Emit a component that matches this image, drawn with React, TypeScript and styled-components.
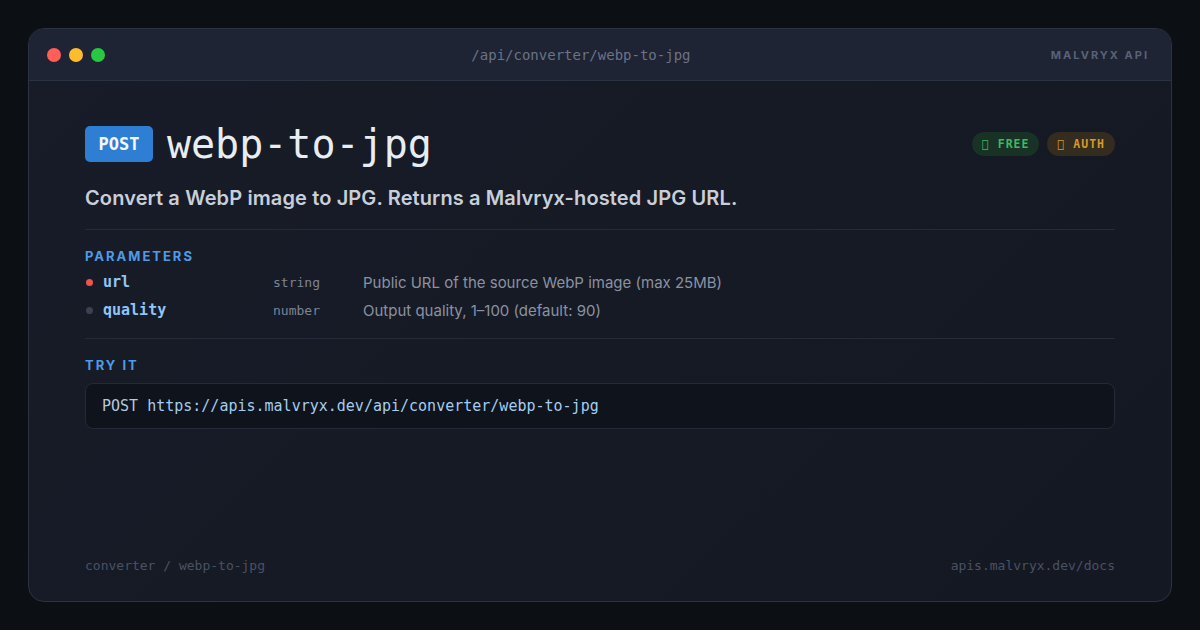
import styled, { createGlobalStyle } from "styled-components"

const mono = `"DejaVu Sans Mono", "Liberation Mono", monospace`
const sans = `Inter, "Noto Sans", sans-serif`

const GlobalStyle = createGlobalStyle`
    html, body {
        margin: 0;
        padding: 0;
        background: #0c0f14;
    }
    #root {
        width: 1200px;
        height: 630px;
    }
`

type Param = {
    name: string
    type: string
    desc: string
    required: boolean
}

const params: Param[] = [
    { name: "url", type: "string", desc: "Public URL of the source WebP image (max 25MB)", required: true },
    { name: "quality", type: "number", desc: "Output quality, 1\u2013100 (default: 90)", required: false },
]

export default function App() {
    return (
        <Page>
            <GlobalStyle />
            <Window>
                <TitleBar>
                    <Dots>
                        <Dot color="#ff5f57" />
                        <Dot color="#febc2e" />
                        <Dot color="#28c840" />
                    </Dots>
                    <TitlePath>/api/converter/webp-to-jpg</TitlePath>
                    <Brand>MALVRYX API</Brand>
                </TitleBar>
                <Body>
                    <Header>
                        <Method>POST</Method>
                        <EndpointName>webp-to-jpg</EndpointName>
                        <Badges>
                            <Badge variant="free">{"\uE000"} FREE</Badge>
                            <Badge variant="auth">{"\uE000"} AUTH</Badge>
                        </Badges>
                    </Header>
                    <Description>
                        Convert a WebP image to JPG. Returns a Malvryx-hosted JPG URL.
                    </Description>
                    <Divider top={19} bottom={18} />
                    <SectionLabel>PARAMETERS</SectionLabel>
                    <ParamList>
                        {params.map((p) => (
                            <ParamRow key={p.name}>
                                <ReqDot required={p.required} />
                                <ParamName>{p.name}</ParamName>
                                <ParamType>{p.type}</ParamType>
                                <ParamDesc>{p.desc}</ParamDesc>
                            </ParamRow>
                        ))}
                    </ParamList>
                    <Divider top={14} bottom={18} />
                    <SectionLabel>TRY IT</SectionLabel>
                    <CodeBox>
                        <CodeMethod>POST</CodeMethod> https://apis.malvryx.dev/api/converter/webp-to-jpg
                    </CodeBox>
                    <Footer>
                        <FooterText>converter / webp-to-jpg</FooterText>
                        <FooterText>apis.malvryx.dev/docs</FooterText>
                    </Footer>
                </Body>
            </Window>
        </Page>
    )
}

const Page = styled.div`
    width: 1200px;
    height: 630px;
    box-sizing: border-box;
    padding: 28px;
    background: #0c0f14;
`

const Window = styled.div`
    height: 100%;
    box-sizing: border-box;
    border: 1px solid #2b3242;
    border-radius: 16px;
    overflow: hidden;
    background: linear-gradient(135deg, #181c28 0%, #141822 100%);
    display: flex;
    flex-direction: column;
`

const TitleBar = styled.div`
    height: 52px;
    flex-shrink: 0;
    box-sizing: border-box;
    padding: 0 22px 0 18px;
    background: #1e2433;
    border-bottom: 1px solid #2b3242;
    display: flex;
    align-items: center;
`

const Dots = styled.div`
    display: flex;
    gap: 8px;
`

const Dot = styled.span<{ color: string }>`
    width: 14px;
    height: 14px;
    border-radius: 50%;
    background: ${(p) => p.color};
`

const TitlePath = styled.div`
    flex: 1;
    padding-left: 6px;
    text-align: center;
    font-family: ${mono};
    font-size: 14px;
    color: #6b7385;
`

const Brand = styled.div`
    font-family: ${sans};
    font-weight: 700;
    font-size: 11px;
    letter-spacing: 2px;
    color: #596276;
`

const Body = styled.div`
    flex: 1;
    padding: 43px 56px 28px 56px;
    display: flex;
    flex-direction: column;
`

const Header = styled.div`
    display: flex;
    align-items: center;
    height: 40px;
`

const Method = styled.span`
    height: 36px;
    box-sizing: border-box;
    padding: 0 13.5px;
    border-radius: 5px;
    background: #2e7fd3;
    color: #f4f8fc;
    font-family: ${mono};
    font-weight: 700;
    font-size: 17px;
    display: flex;
    align-items: center;
`

const EndpointName = styled.h1`
    margin: 0 0 0 14px;
    font-family: ${mono};
    font-weight: 500;
    font-size: 40px;
    line-height: 1;
    color: #e8edf3;
`

const Badges = styled.div`
    margin-left: auto;
    display: flex;
    gap: 8px;
`

const Badge = styled.span<{ variant: "free" | "auth" }>`
    height: 24px;
    padding: 0 10px;
    border-radius: 12px;
    display: flex;
    align-items: center;
    font-family: ${mono};
    font-weight: 700;
    font-size: 11.5px;
    letter-spacing: 1px;
    background: ${(p) => (p.variant === "free" ? "#193226" : "#342c1f")};
    color: ${(p) => (p.variant === "free" ? "#3fb961" : "#d69a2d")};
`

const Description = styled.p`
    margin: 22px 0 0;
    font-family: ${sans};
    font-weight: 600;
    font-size: 20px;
    letter-spacing: 0.12px;
    color: #c8cfda;
`

const Divider = styled.div<{ top: number; bottom: number }>`
    height: 1px;
    background: #252b38;
    margin: ${(p) => `${p.top}px 0 ${p.bottom}px`};
`

const SectionLabel = styled.div`
    font-family: ${sans};
    font-weight: 700;
    font-size: 13px;
    letter-spacing: 2px;
    color: #4f9be8;
`

const ParamList = styled.div`
    margin-top: 4px;
    display: flex;
    flex-direction: column;
`

const ParamRow = styled.div`
    height: 28px;
    display: grid;
    grid-template-columns: 18px 170px 90px 1fr;
    align-items: center;
`

const ReqDot = styled.span<{ required: boolean }>`
    width: 7px;
    height: 7px;
    margin-left: 1px;
    border-radius: 50%;
    background: ${(p) => (p.required ? "#f0524f" : "#3a4151")};
`

const ParamName = styled.span`
    font-family: ${mono};
    font-weight: 700;
    font-size: 15px;
    color: #8fc6f6;
`

const ParamType = styled.span`
    font-family: ${mono};
    font-size: 13px;
    color: #7c8495;
`

const ParamDesc = styled.span`
    font-family: ${sans};
    font-size: 15px;
    color: #8a92a2;
`

const CodeBox = styled.div`
    margin-top: 10px;
    height: 46px;
    box-sizing: border-box;
    padding: 0 16px;
    border: 1px solid #242a37;
    border-radius: 8px;
    background: #0f131b;
    display: flex;
    align-items: center;
    white-space: pre;
    font-family: ${mono};
    font-size: 15px;
    color: #a4cdf0;
`

const CodeMethod = styled.span`
    color: #b5c8dc;
`

const Footer = styled.div`
    margin-top: auto;
    display: flex;
    justify-content: space-between;
`

const FooterText = styled.span`
    font-family: ${mono};
    font-size: 13px;
    color: #4a5264;
`
